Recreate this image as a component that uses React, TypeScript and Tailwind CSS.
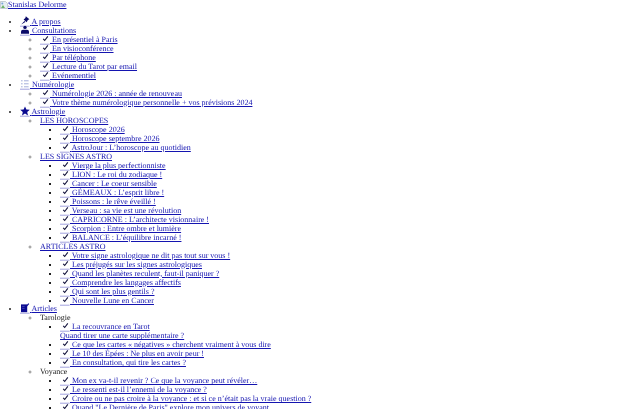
import React from "react";

const iconClass =
  "inline-block w-[10px] h-[10px] align-baseline -my-[2px] overflow-visible";

const Base = () => <path d="M0 10.2 H9.6" stroke="#7a7ad0" strokeWidth="0.7" fill="none" />;

const Check = () => (
  <svg viewBox="0 0 10 10" className={iconClass} aria-hidden="true">
    <path d="M3.2 4.9 L4.7 6.5 L7.8 2.4" fill="none" stroke="#14143c" strokeWidth="1.1" />
    <Base />
  </svg>
);

const Pin = () => (
  <svg viewBox="0 0 10 10" className={iconClass} aria-hidden="true">
    <path d="M5.8 0.2 L9.4 3.2 L7.9 3.9 L6.6 6.2 L3.6 3.4 L5.4 2 Z M4.4 5 L1.2 8.6 L5.4 6 Z" fill="#0a0a68" />
    <Base />
  </svg>
);

const People = () => (
  <svg viewBox="0 0 10 10" className={iconClass} aria-hidden="true">
    <circle cx="5" cy="2.4" r="1.7" fill="#0a0a68" />
    <path d="M1 8.8 V6.6 Q1 4.8 3 4.8 H7 Q9 4.8 9 6.6 V8.8 Z" fill="#0a0a68" />
    <Base />
  </svg>
);

const ListIcon = () => (
  <svg viewBox="0 0 10 10" className={iconClass} aria-hidden="true">
    <path d="M1 1.8 H2.6 M1 4.8 H2.6 M1 7.8 H2.6 M4 1.8 H8.6 M4 4.8 H8.6 M4 7.8 H8.6" stroke="#9aa5d6" strokeWidth="0.9" fill="none" />
    <Base />
  </svg>
);

const Star = () => (
  <svg viewBox="0 0 10 10" className={iconClass} aria-hidden="true">
    <path d="M5 0.4 L6.4 3.6 L9.8 3.8 L7.2 6 L8 9.4 L5 7.6 L2 9.4 L2.8 6 L0.2 3.8 L3.6 3.6 Z" fill="#0a0a90" />
    <Base />
  </svg>
);

const Note = () => (
  <svg viewBox="0 0 10 10" className={iconClass} aria-hidden="true">
    <path d="M1 1.4 H7.2 V9.2 H1 Z" fill="#0a0a90" />
    <path d="M5.6 4.2 L8.8 0.6" stroke="#0a0a90" strokeWidth="1.2" />
    <path d="M2.2 3.4 H4.6 M2.2 5.4 H4.6" stroke="#7a7ad8" strokeWidth="0.5" />
    <Base />
  </svg>
);

const L = ({ icon, children }: { icon: React.ReactNode; children: React.ReactNode }) => (
  <a href="#" className="text-[#1414b0] underline">
    {icon} {children}
  </a>
);

const Item = ({ children }: { children: React.ReactNode }) => (
  <li>
    <L icon={<Check />}>{children}</L>
  </li>
);

const U1 = ({ children }: { children: React.ReactNode }) => (
  <ul className="list-disc pl-5 my-[8px] [&>li::marker]:text-[#222222]">{children}</ul>
);
const U2 = ({ children }: { children: React.ReactNode }) => (
  <ul className="list-[circle] pl-5 [&>li::marker]:text-[#8a8a8a]">{children}</ul>
);
const U3 = ({ children }: { children: React.ReactNode }) => (
  <ul className="list-[square] pl-5 [&>li::marker]:text-[#222222]">{children}</ul>
);

export default function App() {
  return (
    <div className="h-[409px] overflow-hidden bg-white">
      <div className="will-change-transform text-[#222222] text-[8px] leading-[8.98px] [text-rendering:geometricPrecision] font-['Liberation_Serif',serif]">
        <a href="#" className="text-[#1414b0] underline">
          <svg viewBox="0 0 8 8" className="inline-block w-2 h-2 align-[-1px] -my-[1px]" aria-hidden="true">
            <path d="M0.5 0.5 H5.5 L7.5 2.5 V7.5 H0.5 Z" fill="#e6eef2" stroke="#a9b4ba" strokeWidth="0.6" />
            <path d="M1 7 L3 4 L5 7 Z" fill="#6fb36b" />
            <circle cx="2.3" cy="2.4" r="1" fill="#7aa6d8" />
          </svg>
          Stanislas Delorme
        </a>
        <U1>
          <li><L icon={<Pin />}>A propos</L></li>
          <li>
            <L icon={<People />}>Consultations</L>
            <U2>
              <Item>En présentiel à Paris</Item>
              <Item>En visioconférence</Item>
              <Item>Par téléphone</Item>
              <Item>Lecture du Tarot par email</Item>
              <Item>Evénementiel</Item>
            </U2>
          </li>
          <li>
            <L icon={<ListIcon />}>Numérologie</L>
            <U2>
              <Item>Numérologie 2026 : année de renouveau</Item>
              <Item>Votre thème numérologique personnelle + vos prévisions 2024</Item>
            </U2>
          </li>
          <li>
            <L icon={<Star />}>Astrologie</L>
            <U2>
              <li>
                <a href="#" className="text-[#1414b0] underline">LES HOROSCOPES</a>
                <U3>
                  <Item>Horoscope 2026</Item>
                  <Item>Horoscope septembre 2026</Item>
                  <Item>AstroJour : L’horoscope au quotidien</Item>
                </U3>
              </li>
              <li>
                <a href="#" className="text-[#1414b0] underline">LES SIGNES ASTRO</a>
                <U3>
                  <Item>Vierge la plus perfectionniste</Item>
                  <Item>LION : Le roi du zodiaque !</Item>
                  <Item>Cancer : Le coeur sensible</Item>
                  <Item>GÉMEAUX : L’esprit libre !</Item>
                  <Item>Poissons : le rêve éveillé !</Item>
                  <Item>Verseau : sa vie est une révolution</Item>
                  <Item>CAPRICORNE : L’architecte visionnaire !</Item>
                  <Item>Scorpion : Entre ombre et lumière</Item>
                  <Item>BALANCE : L’équilibre incarné !</Item>
                </U3>
              </li>
              <li>
                <a href="#" className="text-[#1414b0] underline">ARTICLES ASTRO</a>
                <U3>
                  <Item>Votre signe astrologique ne dit pas tout sur vous !</Item>
                  <Item>Les préjugés sur les signes astrologiques</Item>
                  <Item>Quand les planètes reculent, faut-il paniquer ?</Item>
                  <Item>Comprendre les langages affectifs</Item>
                  <Item>Qui sont les plus gentils ?</Item>
                  <Item>Nouvelle Lune en Cancer</Item>
                </U3>
              </li>
            </U2>
          </li>
          <li>
            <L icon={<Note />}>Articles</L>
            <U2>
              <li>
                Tarologie
                <U3>
                  <li>
                    <L icon={<Check />}>La recouvrance en Tarot</L>
                    <br />
                    <a href="#" className="text-[#1414b0] underline">Quand tirer une carte supplémentaire ?</a>
                  </li>
                  <Item>Ce que les cartes « négatives » cherchent vraiment à vous dire</Item>
                  <Item>Le 10 des Épées : Ne plus en avoir peur !</Item>
                  <Item>En consultation, qui tire les cartes ?</Item>
                </U3>
              </li>
              <li>
                Voyance
                <U3>
                  <Item>Mon ex va-t-il revenir ? Ce que la voyance peut révéler…</Item>
                  <Item>Le ressenti est-il l’ennemi de la voyance ?</Item>
                  <Item>Croire ou ne pas croire à la voyance : et si ce n’était pas la vraie question ?</Item>
                  <Item>Quand "Le Dernière de Paris" explore mon univers de voyant</Item>
                </U3>
              </li>
            </U2>
          </li>
        </U1>
      </div>
    </div>
  );
}
